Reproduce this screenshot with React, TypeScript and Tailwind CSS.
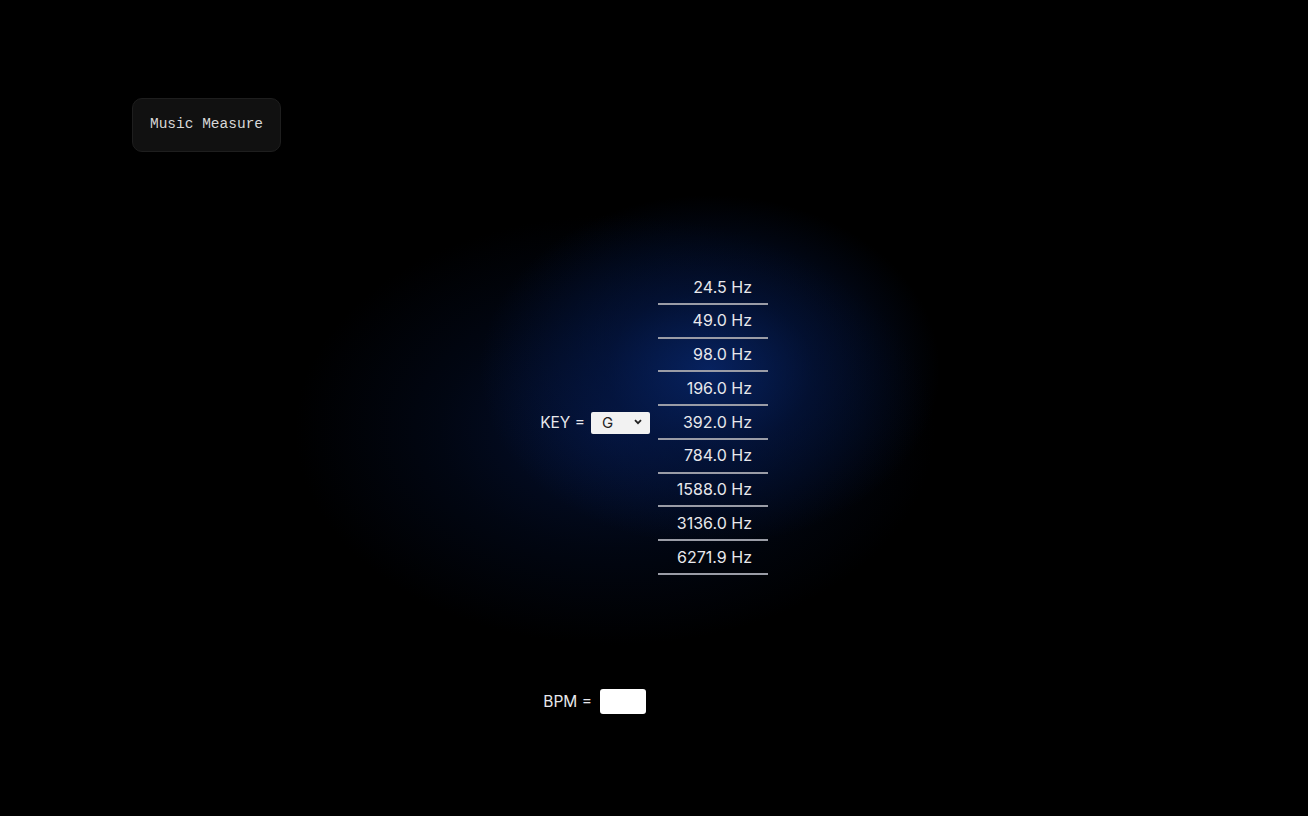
import { useState } from "react";

const FREQS = ["24.5", "49.0", "98.0", "196.0", "392.0", "784.0", "1588.0", "3136.0", "6271.9"];

export default function App() {
  const [key, setKey] = useState("G");
  const [bpm, setBpm] = useState("");

  return (
    <div
      className="min-h-screen w-full bg-black text-[#e8e8ec] font-['Inter','Liberation_Sans',sans-serif]
      bg-[radial-gradient(ellipse_230px_175px_at_710px_370px,rgba(8,40,112,0.8)_0%,rgba(5,28,84,0.5)_45%,rgba(0,0,0,0)_100%),radial-gradient(ellipse_320px_215px_at_615px_430px,rgba(4,18,54,0.9)_0%,rgba(2,10,30,0.6)_55%,rgba(0,0,0,1)_100%)]"
    >
      <header className="pt-[98px] pl-[132px]">
        <button className="h-[54px] w-[149px] rounded-[10px] border border-[#1e1e1e] bg-[#111111] text-[14.5px] text-[#d8d8d8] font-['Liberation_Mono',monospace]">
          Music Measure
        </button>
      </header>

      <main className="mt-[119px] grid grid-cols-2 gap-x-2 text-[15.5px]">
        <div className="flex items-center justify-end gap-[6px]">
          <span>KEY =</span>
          <div className="relative">
            <select
              value={key}
              onChange={(e) => setKey(e.target.value)}
              className="h-[22px] w-[59px] appearance-none rounded-[2px] bg-[#f2f2f2] pl-[11px] text-[15px] text-[#222] outline-none"
            >
              {["C", "C#", "D", "D#", "E", "F", "F#", "G", "G#", "A", "A#", "B"].map((k) => (
                <option key={k}>{k}</option>
              ))}
            </select>
            <svg
              className="pointer-events-none absolute right-[8px] top-[8px]"
              width="8"
              height="6"
              viewBox="0 0 8 6"
            >
              <path d="M1 1.2 L4 4.2 L7 1.2" fill="none" stroke="#222" strokeWidth="1.8" />
            </svg>
          </div>
        </div>
        <ul className="w-[110px] text-[16px]">
          {FREQS.map((f) => (
            <li key={f} className="border-b-2 border-[#9a9ca6] pt-[6.5px] pb-[5.5px] pr-4 text-right leading-[19.75px]">
              {f} Hz
            </li>
          ))}
        </ul>

        <div className="mt-[114px] mr-1 flex items-center justify-end gap-[8px]">
          <span>BPM =</span>
          <input
            value={bpm}
            onChange={(e) => setBpm(e.target.value)}
            className="h-[25px] w-[46px] rounded-[3px] bg-white px-1 text-sm text-black outline-none"
          />
        </div>
      </main>
    </div>
  );
}
